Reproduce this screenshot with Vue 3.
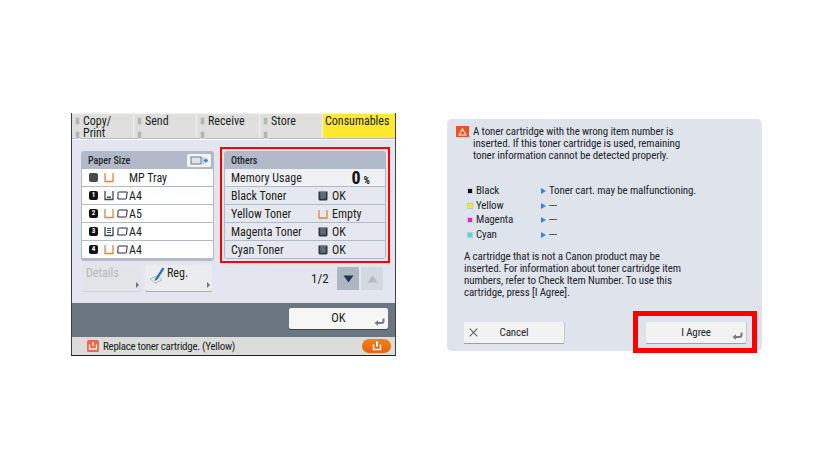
<script setup>
const tabs = [
  { top: 'Copy/', bottom: 'Print', w: 61 },
  { top: 'Send', w: 62 },
  { top: 'Receive', w: 62 },
  { top: 'Store', w: 62 },
]
const trays = [
  { n: '', kind: 'mp', empty: true, label: 'MP Tray' },
  { n: '1', kind: 'low', label: 'A4' },
  { n: '2', kind: 'empty', empty: true, label: 'A5' },
  { n: '3', kind: 'full', label: 'A4' },
  { n: '4', kind: 'empty', empty: true, label: 'A4' },
]
const others = [
  { name: 'Black Toner', state: 'OK' },
  { name: 'Yellow Toner', state: 'Empty', empty: true },
  { name: 'Magenta Toner', state: 'OK' },
  { name: 'Cyan Toner', state: 'OK' },
]
const colors = [
  { name: 'Black', c: '#111', msg: 'Toner cart. may be malfunctioning.' },
  { name: 'Yellow', c: '#f4ee1e', msg: '---' },
  { name: 'Magenta', c: '#ee1fd0', msg: '---' },
  { name: 'Cyan', c: '#2fe6e6', msg: '---' },
]
</script>

<template>
  <div class="page">
    <section class="device">
      <div class="tabs">
        <div v-for="t in tabs" :key="t.top" class="tab" :style="{ width: t.w + 'px' }">
          <div class="tabline"><i class="led"></i><span>{{ t.top }}</span></div>
          <div class="tabline"><i class="led"></i><span>{{ t.bottom }}</span></div>
        </div>
        <div class="tab active">Consumables</div>
      </div>
      <div class="body">
        <div class="leftcol">
          <div class="panel paper">
            <div class="phead">
              <span>Paper Size</span>
              <span class="headbtn">
                <svg width="24" height="13" viewBox="0 0 24 13"><rect x="4" y="3" width="10" height="7" fill="#dfe3ea" stroke="#6c7686"/><path d="M16 3v7" stroke="#9aa3b0"/><path d="M21 6.500h-3M19.500 4.500l-2 2 2 2" fill="none" stroke="#2b86d8" stroke-width="1.400"/></svg>
              </span>
            </div>
            <div v-for="t in trays" :key="t.n + t.label" class="tray">
              <span class="num" :class="{ grey: !t.n }">{{ t.n }}</span>
              <svg class="cup" width="10" height="11" viewBox="0 0 10 11">
                <path d="M1 1v8.500h8V1" fill="none" :stroke="t.empty ? '#e5823e' : '#3f4650'" stroke-width="1.300"/>
                <rect v-if="t.kind === 'low'" x="3" y="6.500" width="4" height="1.500" fill="#3f4650"/>
                <path v-if="t.kind === 'full'" d="M3 2.500h4M3 4.500h4M3 6.500h4" stroke="#3f4650" stroke-width="1.100"/>
              </svg>
              <svg v-if="t.kind !== 'mp'" class="sheet" width="11" height="9" viewBox="0 0 11 9"><path d="M1.500 1h8.700L9.500 7a1 1 0 0 1-1 1H.8l.3-6a1 1 0 0 1 .4-1z" fill="#fff" stroke="#22262c" stroke-width="1"/></svg>
              <span :class="t.kind === 'mp' ? 'mp' : ''">{{ t.label }}</span>
            </div>
          </div>
          <div class="btnrow">
            <div class="softbtn details">Details<i class="tri"></i></div>
            <div class="softbtn reg">
              <svg width="20" height="20" viewBox="0 0 20 20"><path d="M3 13l7-3 5 4-7 3z" fill="#f1f1ee" stroke="#9aa0a6" stroke-width=".7"/><path d="M8 13L15.500 1.500l2 1.200L10 14l-2.600 1z" fill="#2d6fc8"/></svg>
              <span>Reg.</span><i class="tri"></i>
            </div>
          </div>
        </div>
        <div class="rightcol">
          <div class="redbox">
            <div class="panel others">
              <div class="phead"><span>Others</span></div>
              <div class="orow memory"><span>Memory Usage</span><span class="val"><b>0</b><small>%</small></span></div>
              <div v-for="o in others" :key="o.name" class="orow">
                <span class="oname">{{ o.name }}</span>
                <svg width="10" height="10" viewBox="0 0 10 10">
                  <path v-if="o.empty" d="M1 1v8h8V1" fill="none" stroke="#e5823e" stroke-width="1.300"/>
                  <g v-else><path d="M.5.500h9v7.500a1.500 1.500 0 0 1-1.500 1.500H2A1.500 1.500 0 0 1 .5 8z" fill="#2f3640"/><path d="M2.500 1v6.500h5V1" fill="#7f8791"/><path d="M4 1v6M6 1v6" stroke="#2f3640" stroke-width=".7"/></g>
                </svg>
                <span class="ostate">{{ o.state }}</span>
              </div>
            </div>
          </div>
          <div class="pager">
            <span class="pg">1/2</span>
            <div class="arrow down"><svg width="11" height="8" viewBox="0 0 11 8"><path d="M.5.500h10L5.500 7.500z" fill="#1f3552"/></svg></div>
            <div class="arrow up"><svg width="11" height="8" viewBox="0 0 11 8"><path d="M.5 7.500h10L5.500.500z" fill="#b3bbc7"/></svg></div>
          </div>
        </div>
      </div>
      <div class="band">
        <div class="okbtn">OK
          <svg class="enter" width="11" height="8" viewBox="0 0 11 8"><path d="M9.500 .500v2.500Q9.500 5 7.500 5H3" fill="none" stroke="#747a81" stroke-width="2"/><path d="M.5 5L4 2.300v5.400z" fill="#747a81"/></svg>
        </div>
      </div>
      <div class="status">
        <span class="sicon"><svg width="12" height="12" viewBox="0 0 12 12"><rect width="12" height="12" rx="1.500" fill="#f2654a"/><path d="M2.500 4.500v4.500h7V4.500M6 2v4" fill="none" stroke="#fff" stroke-width="1.300"/></svg></span>
        <span class="stext">Replace toner cartridge. (Yellow)</span>
        <span class="pill"><svg width="10" height="10" viewBox="0 0 10 10"><path d="M1.500 3.500v5h7v-5" fill="none" stroke="#fff" stroke-width="1.500"/><path d="M5 .500v5" stroke="#fff" stroke-width="2"/></svg></span>
      </div>
    </section>

    <section class="dialog">
      <div class="warn">
        <span class="wicon"><svg width="9" height="8" viewBox="0 0 9 8"><path d="M4.500 1L8 7H1z" fill="none" stroke="#fff" stroke-width="1.100"/></svg></span>
        <p>A toner cartridge with the wrong item number is<br>inserted. If this toner cartridge is used, remaining<br>toner information cannot be detected properly.</p>
      </div>
      <div class="list">
        <div v-for="c in colors" :key="c.name" class="lrow">
          <i class="sw" :style="{ background: c.c }"></i>
          <span class="lname">{{ c.name }}</span>
          <i class="blue"></i>
          <span>{{ c.msg }}</span>
        </div>
      </div>
      <p class="para">A cartridge that is not a Canon product may be<br>inserted. For information about toner cartridge item<br>numbers, refer to Check Item Number. To use this<br>cartridge, press [I Agree].</p>
      <div class="actions">
        <div class="dbtn cancel">
          <svg class="x" width="9" height="9" viewBox="0 0 9 9"><path d="M.7.700l7.600 7.600M8.300.700L.7 8.300" stroke="#5d6168" stroke-width="1.100"/></svg>
          <span>Cancel</span>
        </div>
        <div class="agreebox">
          <div class="dbtn agree"><span>I Agree</span>
            <svg class="enter2" width="11" height="8" viewBox="0 0 11 8"><path d="M9.500 .500v2.500Q9.500 5 7.500 5H3" fill="none" stroke="#747a81" stroke-width="2"/><path d="M.5 5L4 2.300v5.400z" fill="#747a81"/></svg>
          </div>
        </div>
      </div>
    </section>
  </div>
</template>

<style scoped>
.page {
  width: 838px; height: 470px; background: #fff; box-sizing: border-box;
  display: flex; align-items: flex-start; overflow: hidden;
  padding: 113px 0 0 71px;
  font-family: Roboto, "Liberation Sans", sans-serif; color: #1b1e22;
  font-stretch: 85%;
}
.device {
  width: 325px; height: 243px; flex: none; box-sizing: border-box;
  border-left: 1px solid #3b3f44; border-right: 1px solid #3b3f44; border-bottom: 1px solid #222;
  display: flex; flex-direction: column; background: #e3e6ee;
  font-size: 12px;
}
.tabs { display: flex; height: 26px; gap: 1px; padding-top: 1px; background: #f2f3f2; flex: none; border-bottom: 1px solid #b8bcc0; box-sizing: border-box; }
.tab { background: #dfe0de; padding: 1px 0 0 3px; box-sizing: border-box; line-height: 12px; }
.tabline { display: flex; align-items: center; height: 12px; gap: 3px; }
.led { width: 5px; height: 8px; background: #b4b7b7; border: 1px solid #d2d4d4; box-sizing: border-box; }
.tabline + .tabline .led { margin-top: 3px; }
.tab.active { flex: 1; background: #ffe92e; padding: 1px 0 0 2px; }
.body { flex: 1; display: flex; padding: 7px 0 0 9px; border-top: 1px solid #fff; }
.leftcol { width: 133px; margin-right: 6px; }
.panel { background: #b2b9c8; border-radius: 3px; }
.paper { height: 110px; padding: 0 1px 1px; box-sizing: border-box; overflow: hidden; margin-top: 4px; }
.phead { height: 18px; display: flex; align-items: center; justify-content: space-between; padding: 0 6px; font-size: 10px; font-weight: 500; color: #22262c; }
.headbtn { width: 24px; height: 13px; background: #f3f4f7; border-radius: 2px; display: flex; margin-right: -4px; }
.tray { height: 17px; margin-bottom: 1px; background: #fff; display: flex; align-items: center; padding-left: 7px; }
.num { width: 9px; height: 9px; background: #111; color: #fff; border-radius: 2px; font-size: 7px; font-weight: 700; line-height: 9px; text-align: center; margin-right: 6px; }
.num.grey { background: #4a4a4a; }
.cup { margin-right: 3px; flex: none; }
.sheet { margin-right: 1px; }
.mp { margin-left: 12px; }
.btnrow { display: flex; gap: 4px; margin-top: 4px; margin-left: 1px; }
.softbtn { height: 26px; background: #ebecee; border-radius: 2px; box-sizing: border-box; position: relative; box-shadow: 0 1px 0 #a9adb3; }
.details { width: 59px; padding: 1px 0 0 4px; color: #b4b8bf; background: #e2e4e8; box-shadow: 0 1px 0 #cfd2d8; }
.reg { width: 67px; display: flex; align-items: flex-start; padding: 1px 0 0 2px; }
.tri { position: absolute; right: 2px; bottom: 3px; border-left: 3px solid #6f747c; border-top: 3px solid transparent; border-bottom: 3px solid transparent; }
.rightcol { width: 170px; }
.redbox { border: 2px solid #f00; padding: 2px; height: 116px; box-sizing: border-box; }
.others { height: 108px; padding: 0 1px; box-sizing: border-box; overflow: hidden; }
.orow { height: 17px; margin-bottom: 1px; background: #e6e8ef; display: flex; align-items: center; padding-left: 6px; }
.memory { justify-content: space-between; padding-right: 15px; background: #eef0f4; }
.oname { width: 87px; }
.ostate { margin-left: 4px; }
.val b { font-size: 18px; font-weight: 700; color: #111; }
.val small { font-size: 10px; font-weight: 700; margin-left: 3px; }
.pager { display: flex; align-items: center; margin-top: 4px; height: 23px; }
.pg { margin-left: 91px; width: 26px; font-size: 13px; }
.arrow { width: 22px; height: 23px; display: flex; align-items: center; justify-content: center; background: #aeb6c3; margin-right: 2px; }
.arrow.up { background: #d4d8e0; }
.band { height: 34px; background: #6b7680; flex: none; padding: 5px 0 0 217px; box-sizing: border-box; }
.okbtn { width: 99px; height: 21px; background: #f6f6f6; border-radius: 2px; text-align: center; line-height: 20px; font-size: 12.500px; position: relative; box-shadow: 0 1px 0 #3f464c; }
.enter { position: absolute; right: 3px; bottom: 3px; }
.status { height: 18px; flex: none; background: #dcdcda; display: flex; align-items: center; padding-left: 15px; }
.sicon { width: 12px; height: 12px; margin-right: 4px; display: flex; }
.stext { width: 259px; font-size: 11px; letter-spacing: -.3px; }
.pill { width: 29px; height: 14px; background: linear-gradient(#f0821a, #e8620c); border-radius: 7px; display: flex; align-items: center; justify-content: center; }

.dialog {
  width: 315px; height: 232px; flex: none; margin: 6px 0 0 51px; box-sizing: border-box;
  background: #dfe3ec; border-radius: 5px; padding: 7px 7px 0 9px; font-size: 11px; letter-spacing: -.13px; line-height: 12px; color: #22252a;
  display: flex; flex-direction: column;
}
.warn { display: flex; }
.wicon { width: 13px; height: 11px; background: #f0501e; display: flex; align-items: center; justify-content: center; margin-right: 4px; }
p { margin: 0; }
.list { margin-top: 22px; margin-left: 11px; }
.lrow { display: flex; align-items: center; height: 14.600px; }
.sw { width: 4px; height: 4px; border: 1px solid #c4c8cf; margin-right: 3px; }
.lname { width: 65px; }
.blue { border-left: 5px solid #3d85c6; border-top: 3px solid transparent; border-bottom: 3px solid transparent; margin-right: 3px; }
.para { margin-top: 9px; margin-left: 8px; }
.actions { display: flex; margin-top: 23px; margin-left: 8px; align-items: flex-start; }
.dbtn { height: 21px; width: 100px; flex: none; background: #f2f2f2; box-shadow: 0 1px 0 #9ea2a8, 1px 0 0 #c6c9ce; border-radius: 1px; display: flex; align-items: center; justify-content: center; position: relative; box-sizing: border-box; }
.x { position: absolute; left: 5px; top: 6px; }
.enter2 { position: absolute; right: 3px; bottom: 3px; }
.agreebox { margin-left: 69px; margin-top: -11px; border: 5px solid #f00; padding: 6px 6px 5px 8px; flex: none; width: 124px; height: 42px; box-sizing: border-box; }
</style>

<style>
body { margin: 0; background: #fff; }
</style>
